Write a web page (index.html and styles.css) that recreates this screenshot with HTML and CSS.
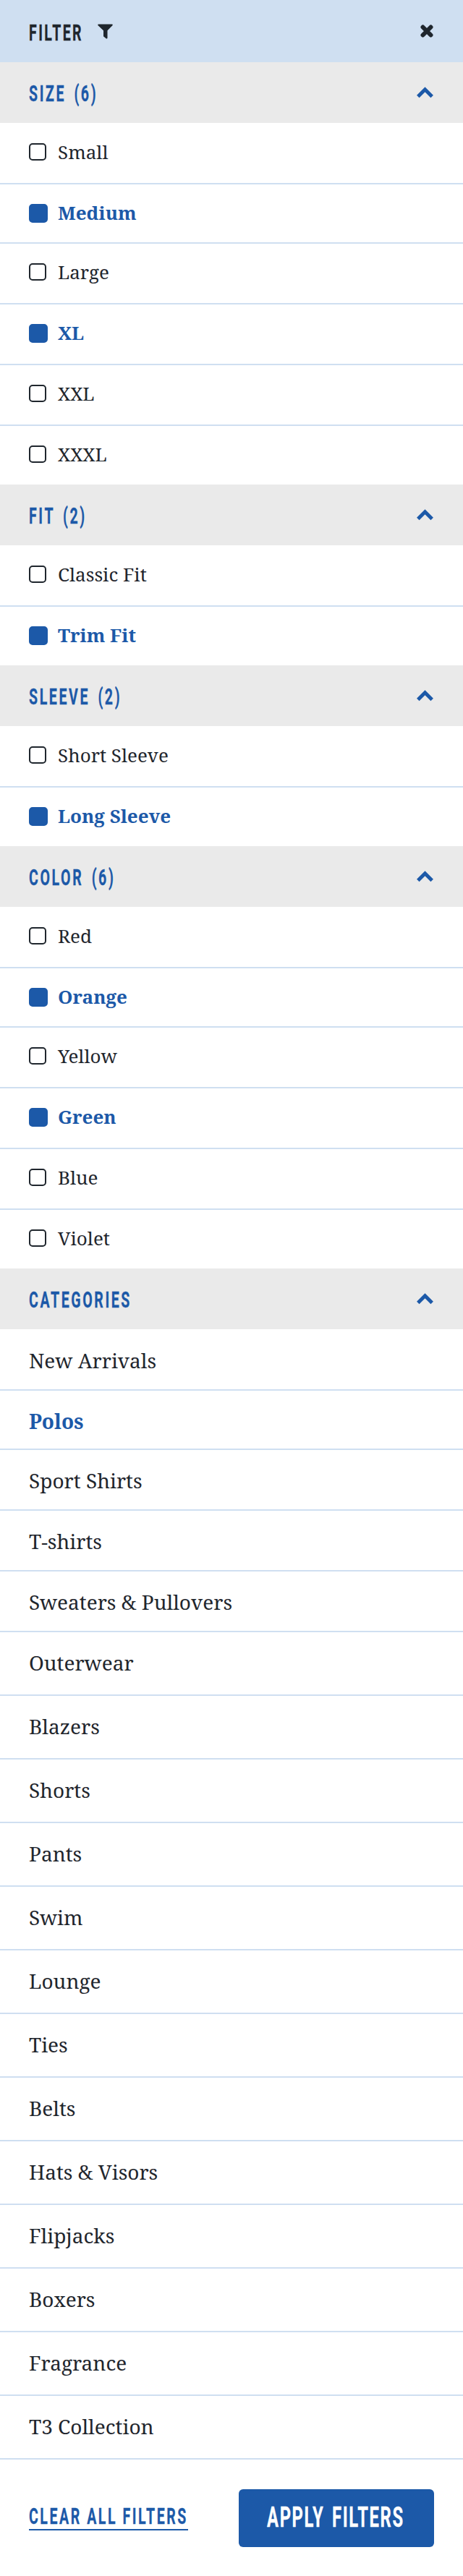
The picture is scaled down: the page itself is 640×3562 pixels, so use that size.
FILE: index.html
```html
<!DOCTYPE html>
<html lang="en">
<head>
<meta charset="utf-8">
<title>Filter</title>
<link rel="stylesheet" href="styles.css">
</head>
<body>
<svg width="0" height="0" class="defs"><symbol id="chev" viewBox="0 0 24 16"><path d="M2.300 13.500 12 3.800l9.700 9.700" fill="none" stroke="currentColor" stroke-width="5"/></symbol></svg>
<header class="top"><h1 class="cond">FILTER</h1>
<svg class="funnel" viewBox="0 0 21 21"><path d="M.8.5h19.400q1 .8.2 1.700L13.500 9.300v10.200q-.5 1.500-1.800.7L8 17.200V9.300L.6 2.200Q-.2 1.300.8.500z" fill="currentColor"/></svg>
<svg class="close" viewBox="0 0 18 18"><path d="M3.500 3.500l11 11M14.500 3.500l-11 11" stroke="currentColor" stroke-width="6" stroke-linecap="round"/></svg></header>
<section><h2 class="head"><span class="cond">SIZE (6)</span><svg class="chev"><use href="#chev"/></svg></h2>
<ul class="options"><li><i></i><span>Small</span></li><li class="on"><i></i><span>Medium</span></li><li><i></i><span>Large</span></li><li class="on"><i></i><span>XL</span></li><li><i></i><span>XXL</span></li><li><i></i><span>XXXL</span></li></ul></section>
<section><h2 class="head"><span class="cond">FIT (2)</span><svg class="chev"><use href="#chev"/></svg></h2>
<ul class="options"><li><i></i><span>Classic Fit</span></li><li class="on"><i></i><span>Trim Fit</span></li></ul></section>
<section><h2 class="head"><span class="cond">SLEEVE (2)</span><svg class="chev"><use href="#chev"/></svg></h2>
<ul class="options"><li><i></i><span>Short Sleeve</span></li><li class="on"><i></i><span>Long Sleeve</span></li></ul></section>
<section><h2 class="head"><span class="cond">COLOR (6)</span><svg class="chev"><use href="#chev"/></svg></h2>
<ul class="options"><li><i></i><span>Red</span></li><li class="on"><i></i><span>Orange</span></li><li><i></i><span>Yellow</span></li><li class="on"><i></i><span>Green</span></li><li><i></i><span>Blue</span></li><li><i></i><span>Violet</span></li></ul></section>
<section><h2 class="head"><span class="cond">CATEGORIES</span><svg class="chev"><use href="#chev"/></svg></h2>
<ul class="cats"><li>New Arrivals</li><li class="on">Polos</li><li>Sport Shirts</li><li>T-shirts</li><li>Sweaters &amp; Pullovers</li><li>Outerwear</li><li>Blazers</li><li>Shorts</li><li>Pants</li><li>Swim</li><li>Lounge</li><li>Ties</li><li>Belts</li><li>Hats &amp; Visors</li><li>Flipjacks</li><li>Boxers</li><li>Fragrance</li><li>T3 Collection</li></ul></section>
<footer class="foot"><a class="clear"><span class="cond">CLEAR ALL FILTERS</span></a><button class="apply"><span class="cond">APPLY FILTERS</span></button></footer>
</body>
</html>
```
FILE: styles.css
```css
* { box-sizing: border-box; }
body { margin: 0; background: #fff; color: #1f262d; font-family: "Noto Serif", "Droid Serif", "DejaVu Serif Condensed", "DejaVu Serif", serif; }
h1, h2, ul { margin: 0; padding: 0; list-style: none; }
.defs { display: block; }
.cond { display: block; font: 700 32px/40px Roboto, sans-serif; letter-spacing: 4.3px; word-spacing: 6.4px; white-space: nowrap; transform: scaleX(.61); transform-origin: 0 50%; -webkit-text-stroke: .3px currentColor; }
.top { height: 86px; padding: 0 41px 0 40px; display: flex; align-items: center; background: #cfdff1; }
.top .cond { width: 95px; padding-top: 4px; letter-spacing: 4px; }
.funnel { width: 21px; height: 21px; }
.close { width: 18px; height: 18px; margin-left: auto; }
.head { height: 84px; padding: 0 40px; display: flex; align-items: center; justify-content: space-between; background: #eaeaea; color: #1c59a8; }
.head .cond { width: 300px; padding-top: 2px; }
.chev { width: 25px; height: 16px; }
.options li, .cats li { height: 84px; border-bottom: 2px solid #cfdff1; }
.options li { display: flex; align-items: flex-start; padding: 27px 40px 0; font-size: 26px; line-height: 26px; }
.options i { width: 24px; height: 24px; border: 2px solid #1f262d; border-radius: 5px; }
.options span { width: 400px; margin: -1px 0 0 16px; }
.options .on i { width: 26px; height: 26px; background: #1c59a8; border-color: #1c59a8; }
.options .on span { margin-left: 14px; }
.options li:nth-child(1), .cats li:nth-child(1) { height: 85px; }
.options li:nth-child(1) { padding-top: 28px; }
.options li:nth-child(2), .cats li:nth-child(2) { height: 82px; }
.options li:last-child { height: 81px; border: 0; }
.on { color: #1c59a8; font-weight: 700; }
.cats li { padding: 24px 40px 0; font-size: 28px; line-height: 36px; }
.cats li:nth-child(1) { padding-top: 25px; }
.cats li:nth-child(n+6) { height: 88px; }
.foot { height: 161px; padding: 41px 40px 0; display: flex; justify-content: space-between; color: #1c59a8; }
.clear { width: 220px; height: 57px; padding-top: 17px; border-bottom: 2px solid #1c59a8; }
.clear .cond { word-spacing: 0; letter-spacing: 4.2px; }
.apply { width: 270px; height: 80px; padding: 0 0 2px 39px; border: 0; border-radius: 6px; background: #1c59a8; color: #fff; text-align: left; }
.apply .cond { font-size: 39px; letter-spacing: 2.7px; word-spacing: 5px; }
```
